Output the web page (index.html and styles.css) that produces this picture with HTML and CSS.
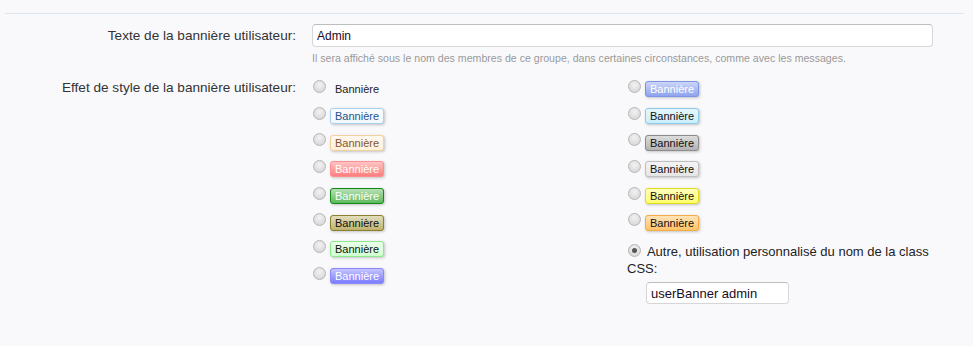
FILE: index.html
```html
<!DOCTYPE html>
<html lang="fr">
<head>
  <meta charset="UTF-8" />
  <title>Bannière utilisateur</title>
  <link rel="stylesheet" href="styles.css">
</head>
<body>
  <div class="form">
    <dl class="ctrl">
      <dt><label for="bannerText">Texte de la bannière utilisateur:</label></dt>
      <dd>
        <input type="text" id="bannerText" class="textbox wide" value="Admin">
        <p class="explain">Il sera affiché sous le nom des membres de ce groupe, dans certaines circonstances, comme avec les messages.</p>
      </dd>
    </dl>

    <dl class="ctrl">
      <dt><label>Effet de style de la bannière utilisateur:</label></dt>
      <dd class="columns">
        <ul class="choices">
          <li><input type="radio" name="style"> <span class="plain">Bannière</span></li>
          <li><input type="radio" name="style"> <span class="banner b-lightblue">Bannière</span></li>
          <li><input type="radio" name="style"> <span class="banner b-peach">Bannière</span></li>
          <li><input type="radio" name="style"> <span class="banner b-red">Bannière</span></li>
          <li><input type="radio" name="style"> <span class="banner b-green">Bannière</span></li>
          <li><input type="radio" name="style"> <span class="banner b-olive">Bannière</span></li>
          <li><input type="radio" name="style"> <span class="banner b-lime">Bannière</span></li>
          <li><input type="radio" name="style"> <span class="banner b-violet">Bannière</span></li>
        </ul>
        <ul class="choices">
          <li><input type="radio" name="style"> <span class="banner b-royal">Bannière</span></li>
          <li><input type="radio" name="style"> <span class="banner b-cyan">Bannière</span></li>
          <li><input type="radio" name="style"> <span class="banner b-gray">Bannière</span></li>
          <li><input type="radio" name="style"> <span class="banner b-silver">Bannière</span></li>
          <li><input type="radio" name="style"> <span class="banner b-yellow">Bannière</span></li>
          <li><input type="radio" name="style"> <span class="banner b-orange">Bannière</span></li>
          <li class="custom">
            <label><input type="radio" name="style" checked> Autre, utilisation personnalisé du nom de la class CSS:</label>
            <input type="text" class="textbox short" value="userBanner admin">
          </li>
        </ul>
      </dd>
    </dl>
  </div>
</body>
</html>
```

FILE: styles.css
```css
body {
  margin: 0;
  background: #f9f9fc;
  font-family: 'Liberation Sans', Arial, sans-serif;
  font-size: 13px;
  color: #222;
}
.form {
  margin: 13px 9px 0 5px;
  border-top: 1px solid #dbe5ef;
  padding-top: 10px;
}
.ctrl {
  display: flex;
  margin: 0 0 11px 0;
}
.ctrl dt {
  width: 291px;
  text-align: right;
  padding-top: 4px;
  line-height: 16px;
  font-size: 13.6px;
  color: #333;
}
.ctrl dd {
  margin: 0 0 0 16px;
  flex: 1;
  padding-right: 31px;
}
.textbox {
  box-sizing: border-box;
  font-family: 'Liberation Sans', Arial, sans-serif;
  font-size: 12px;
  color: #1a0a22;
  background: #fff;
  border: 1px solid #d6d6d6;
  border-top-color: #bdbdbd;
  border-radius: 4px;
  padding: 2px 4px;
  outline: none;
}
.wide {
  width: 100%;
  height: 23px;
}
.explain {
  margin: 4px 0 0;
  font-size: 10.6px;
  line-height: 14px;
  color: #999;
}
.columns {
  display: flex;
}
.choices {
  list-style: none;
  margin: 0;
  padding: 0;
}
.choices:first-child {
  width: 315px;
}
.choices:last-child {
  flex: 1;
}
.choices li {
  height: 26.7px;
  display: flex;
  align-items: center;
  gap: 4px;
}
.choices input[type=radio] {
  appearance: none;
  width: 13px;
  height: 13px;
  margin: 0 0 0 1px;
  border-radius: 50%;
  border: 1px solid #b5b5b5;
  background: radial-gradient(circle at 50% 35%, #f2f2f2, #d2d2d2);
  position: relative;
  top: -3px;
}
.choices input[type=radio]:checked::after {
  content: '';
  position: absolute;
  left: 3px;
  top: 3px;
  width: 5px;
  height: 5px;
  border-radius: 50%;
  background: #555;
}
.plain {
  font-size: 11px;
  margin-left: 5px;
  color: #222;
}
.banner {
  font-size: 11px;
  line-height: 14px;
  padding: 0 4px;
  border: 1px solid;
  border-radius: 3px;
  box-shadow: 1px 1px 3px rgba(0, 0, 0, 0.22);
  background-image: linear-gradient(rgba(255, 255, 255, 0.55), rgba(255, 255, 255, 0));
  color: #111;
}
.b-royal { background-color: #8fa3ee; border-color: #7b94e6; color: #fff; }
.b-lightblue { background-color: #f2f9ff; border-color: #a7d0ef; color: #26518a; }
.b-cyan { background-color: #c9eefa; border-color: #8ccbe7; }
.b-peach { background-color: #fff0da; border-color: #f3d19e; color: #7e5632; }
.b-gray { background-color: #b3b3b3; border-color: #8c8c8c; }
.b-red { background-color: #ff7d7d; border-color: #ff8f8f; color: #fff; }
.b-silver { background-color: #e6e6e6; border-color: #c0c0c0; }
.b-green { background-color: #5dba5d; border-color: #148a14; color: #fff; }
.b-yellow { background-color: #ffff6e; border-color: #e0dc1c; }
.b-olive { background-color: #bfb46c; border-color: #8c8030; }
.b-orange { background-color: #ffc366; border-color: #f3ad44; }
.b-lime { background-color: #d0ffd0; border-color: #8de88d; }
.b-violet { background-color: #7c7cff; border-color: #8a8aff; color: #fff; }
.choices li.custom {
  display: block;
  height: auto;
  padding-top: 7px;
  line-height: 17px;
}
.custom label input {
  top: 1px !important;
  margin-right: 3px !important;
}
.short {
  display: block;
  width: 143px;
  height: 22px;
  margin: 5px 0 0 19px;
  font-size: 13px;
}
```
